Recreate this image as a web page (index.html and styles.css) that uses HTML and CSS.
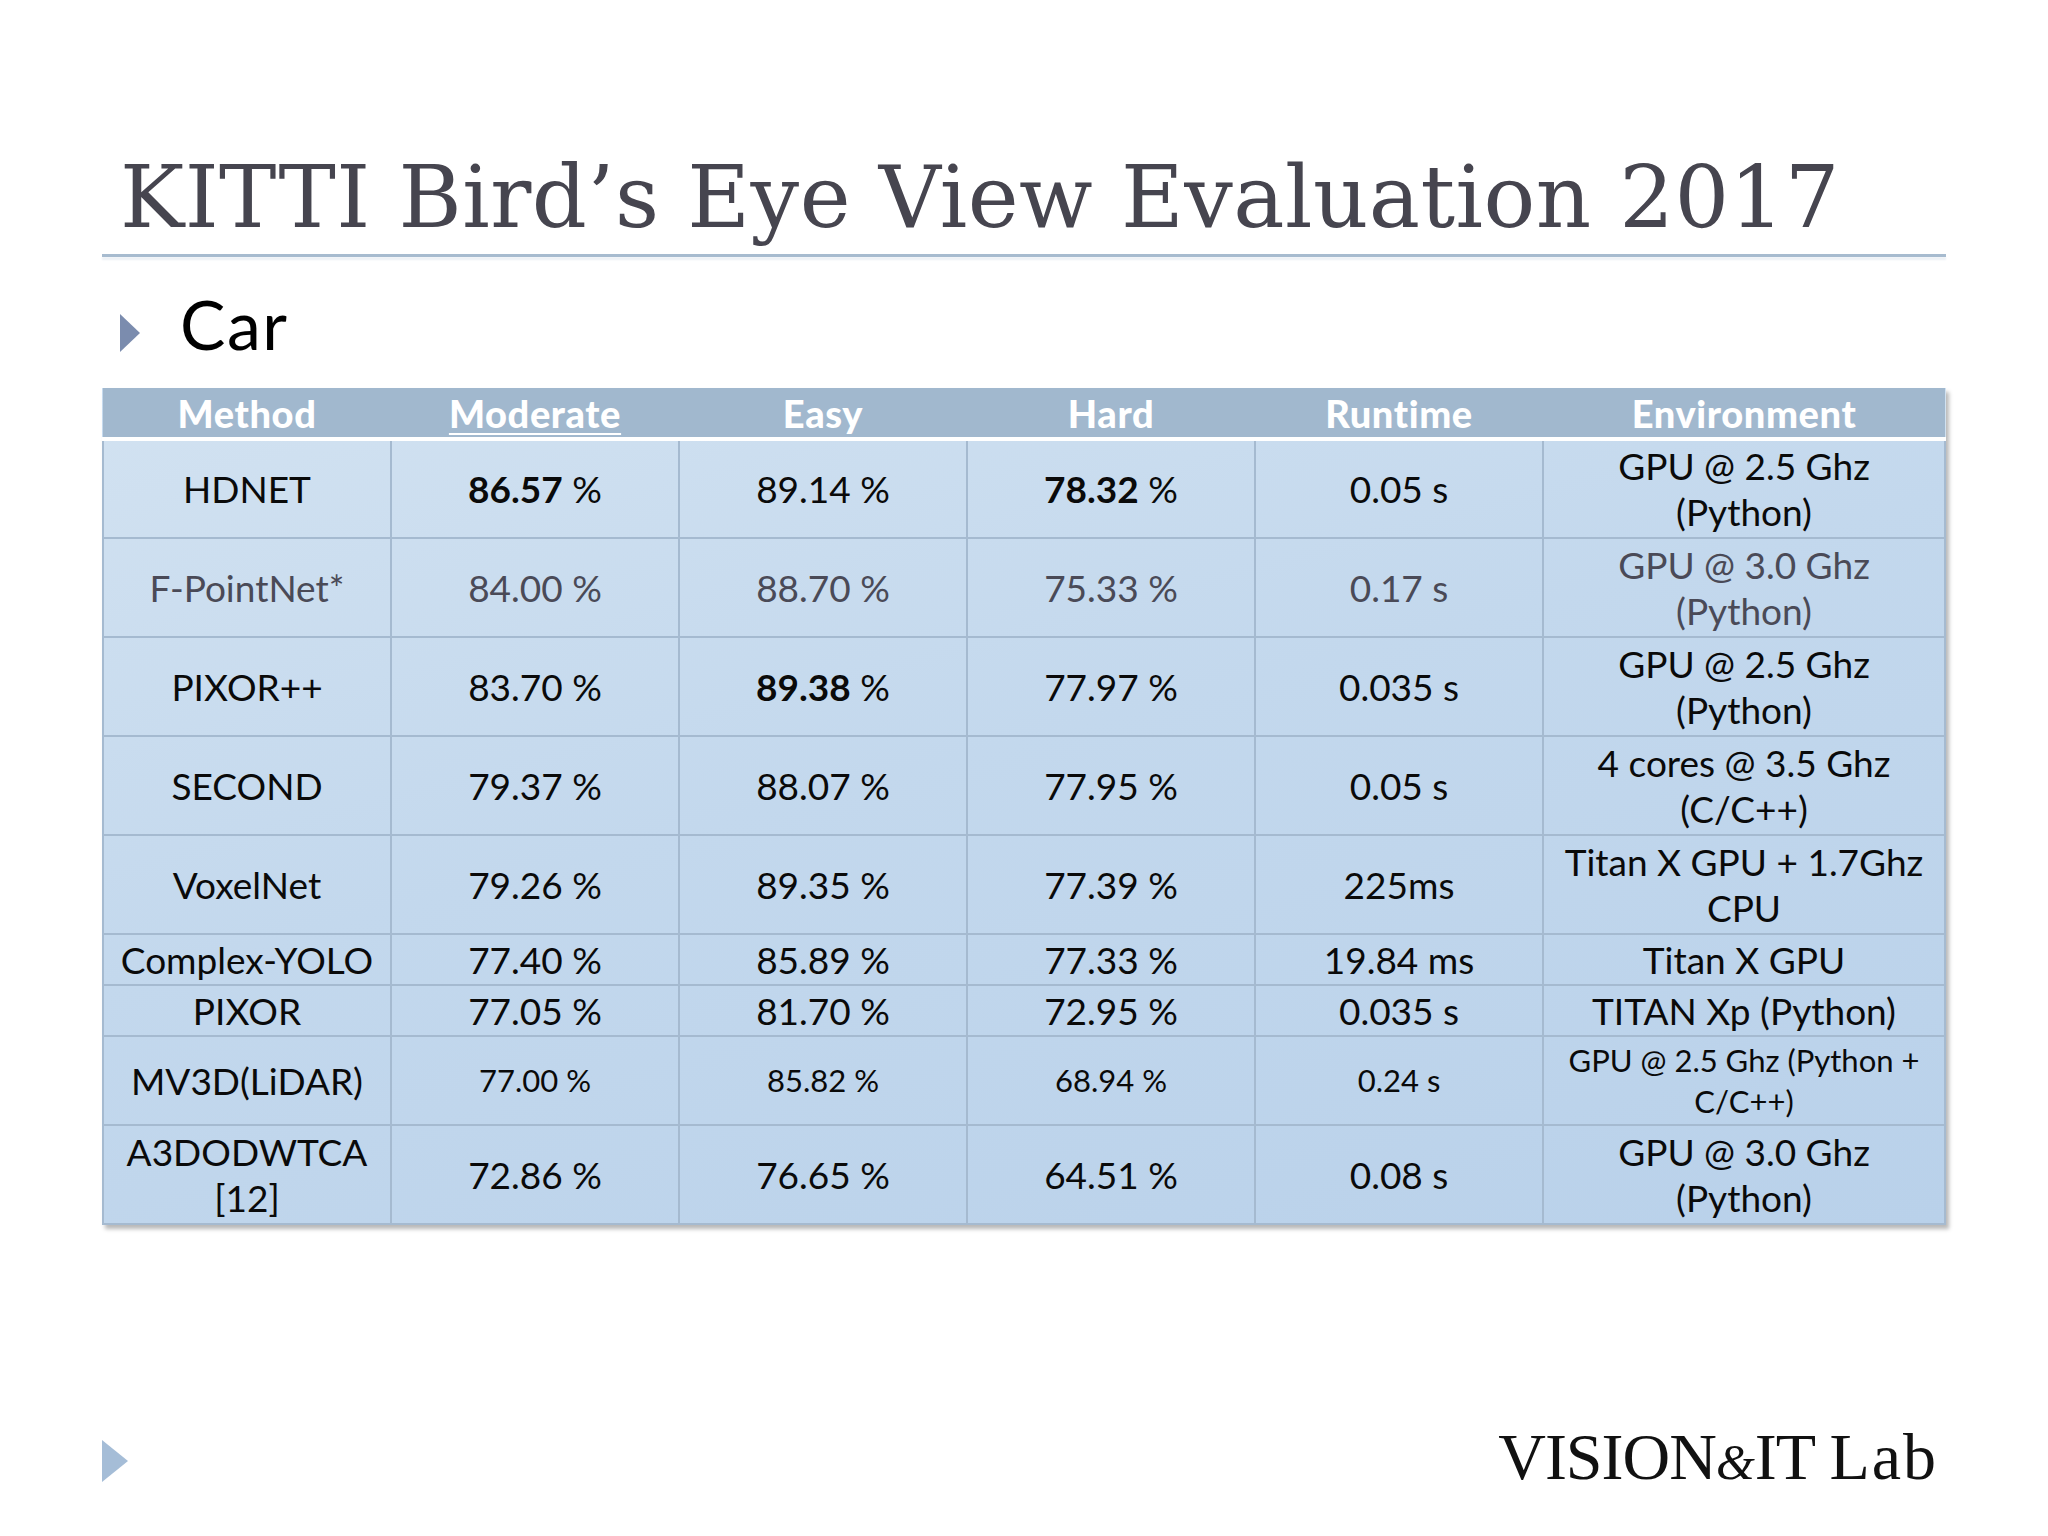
FILE: index.html
```html
<!DOCTYPE html>
<html lang="en">
<head>
<meta charset="utf-8">
<title>KITTI Bird’s Eye View Evaluation 2017</title>
<link rel="stylesheet" href="styles.css">
</head>
<body>
<div class="slide">
  <h1 class="title">KITTI Bird’s Eye View Evaluation 2017</h1>
  <div class="rule"></div>
  <div class="bullet">
    <span class="tri"></span>
    <span class="bullet-text">Car</span>
  </div>
  <table class="results">
    <colgroup>
      <col class="c-method">
      <col class="c-num">
      <col class="c-num">
      <col class="c-num">
      <col class="c-num">
      <col class="c-env">
    </colgroup>
    <thead>
      <tr class="head">
        <th>Method</th>
        <th><span class="ul">Moderate</span></th>
        <th>Easy</th>
        <th>Hard</th>
        <th>Runtime</th>
        <th>Environment</th>
      </tr>
    </thead>
    <tbody>
      <tr class="tall">
        <td>HDNET</td>
        <td><b>86.57</b> %</td>
        <td>89.14 %</td>
        <td><b>78.32</b> %</td>
        <td>0.05 s</td>
        <td class="env">GPU @ 2.5 Ghz<br>(Python)</td>
      </tr>
      <tr class="tall muted">
        <td>F-PointNet*</td>
        <td>84.00 %</td>
        <td>88.70 %</td>
        <td>75.33 %</td>
        <td>0.17 s</td>
        <td class="env">GPU @ 3.0 Ghz<br>(Python)</td>
      </tr>
      <tr class="tall">
        <td>PIXOR++</td>
        <td>83.70 %</td>
        <td><b>89.38</b> %</td>
        <td>77.97 %</td>
        <td>0.035 s</td>
        <td class="env">GPU @ 2.5 Ghz<br>(Python)</td>
      </tr>
      <tr class="tall">
        <td>SECOND</td>
        <td>79.37 %</td>
        <td>88.07 %</td>
        <td>77.95 %</td>
        <td>0.05 s</td>
        <td class="env">4 cores @ 3.5 Ghz<br>(C/C++)</td>
      </tr>
      <tr class="tall">
        <td>VoxelNet</td>
        <td>79.26 %</td>
        <td>89.35 %</td>
        <td>77.39 %</td>
        <td>225ms</td>
        <td class="env">Titan X GPU + 1.7Ghz<br>CPU</td>
      </tr>
      <tr class="short">
        <td>Complex-YOLO</td>
        <td>77.40 %</td>
        <td>85.89 %</td>
        <td>77.33 %</td>
        <td>19.84 ms</td>
        <td class="env">Titan X GPU</td>
      </tr>
      <tr class="short">
        <td>PIXOR</td>
        <td>77.05 %</td>
        <td>81.70 %</td>
        <td>72.95 %</td>
        <td>0.035 s</td>
        <td class="env">TITAN Xp (Python)</td>
      </tr>
      <tr class="small">
        <td class="big">MV3D(LiDAR)</td>
        <td>77.00 %</td>
        <td>85.82 %</td>
        <td>68.94 %</td>
        <td>0.24 s</td>
        <td class="env">GPU @ 2.5 Ghz (Python +<br>C/C++)</td>
      </tr>
      <tr class="tall">
        <td>A3DODWTCA<br>[12]</td>
        <td>72.86 %</td>
        <td>76.65 %</td>
        <td>64.51 %</td>
        <td>0.08 s</td>
        <td class="env">GPU @ 3.0 Ghz<br>(Python)</td>
      </tr>
    </tbody>
  </table>
  <div class="footer">
    <span class="tri-foot"></span>
    <span class="logo">VISION<span class="amp">&amp;</span>IT <span class="lab">Lab</span></span>
  </div>
</div>
</body>
</html>
```

FILE: styles.css
```css
html, body {
  margin: 0;
  padding: 0;
  background: #ffffff;
}

.slide {
  width: 2048px;
  height: 1536px;
  box-sizing: border-box;
  padding: 154px 102px 0 102px;
  display: flex;
  flex-direction: column;
  overflow: hidden;
}

.title {
  margin: 0 0 0 18px;
  font-family: "DejaVu Serif", "Liberation Serif", serif;
  font-weight: normal;
  font-size: 86px;
  line-height: 86px;
  height: 86px;
  letter-spacing: 0.45px;
  color: #46454f;
  white-space: nowrap;
}

.rule {
  margin-top: 14px;
  height: 3px;
  background: #a7bbcf;
  box-shadow: 0 3px 2px rgba(200, 212, 225, 0.35);
}

.bullet {
  margin-top: 27px;
  display: flex;
  align-items: center;
  padding-left: 18px;
  height: 80px;
}

.tri {
  width: 0;
  height: 0;
  border-top: 19px solid transparent;
  border-bottom: 19px solid transparent;
  border-left: 20px solid #7b8cae;
  margin-top: 18px;
}

.bullet-text {
  margin-left: 40px;
  font-family: Lato, "Open Sans", sans-serif;
  font-size: 68px;
  line-height: 80px;
  letter-spacing: 1.5px;
  color: #000;
}

.results {
  margin-top: 24px;
  width: 1844px;
  table-layout: fixed;
  border-collapse: collapse;
  font-family: Lato, "Open Sans", sans-serif;
  font-size: 37px;
  line-height: 46px;
  color: #0a0a0a;
  background: linear-gradient(165deg, #d2e2f1 0%, #c3d8ed 45%, #b9d1ea 100%);
  box-shadow: 3px 4px 4px rgba(0, 0, 0, 0.28);
}

.c-method, .c-num { width: 288px; }
.c-env { width: 402px; }

.results th {
  height: 49px;
  padding: 0;
  background: #a1b8ce;
  color: #ffffff;
  font-size: 38px;
  font-weight: 900;
  letter-spacing: 0.6px;
  border-bottom: 4px solid #ffffff;
  text-align: center;
  vertical-align: middle;
}

.ul {
  text-decoration: underline;
  text-decoration-thickness: 2px;
  text-underline-offset: 5px;
}

.results td {
  padding: 0 2px;
  border: 2px solid #a5bad0;
  text-align: center;
  vertical-align: middle;
  white-space: nowrap;
}

.results b {
  font-weight: bold;
}

.tall { height: 99px; }
.short { height: 51px; }
.small { height: 89px; }

.small td {
  font-size: 31px;
  line-height: 41px;
}

.small td.big {
  font-size: 37px;
}

.muted td {
  color: #4a4a57;
}

.footer {
  margin-top: 201px;
  display: flex;
  align-items: center;
  justify-content: space-between;
  padding-right: 8px;
  height: 66px;
}

.tri-foot {
  width: 0;
  height: 0;
  border-top: 21px solid transparent;
  border-bottom: 21px solid transparent;
  border-left: 26px solid #a5bdd7;
  margin-top: 4px;
}

.logo {
  font-family: "Liberation Serif", "DejaVu Serif", serif;
  font-size: 66px;
  line-height: 66px;
  color: #111;
  letter-spacing: -1px;
  white-space: nowrap;
}

.amp {
  font-style: italic;
  font-size: 50px;
  letter-spacing: 0;
}

.lab {
  letter-spacing: 2px;
}
```
